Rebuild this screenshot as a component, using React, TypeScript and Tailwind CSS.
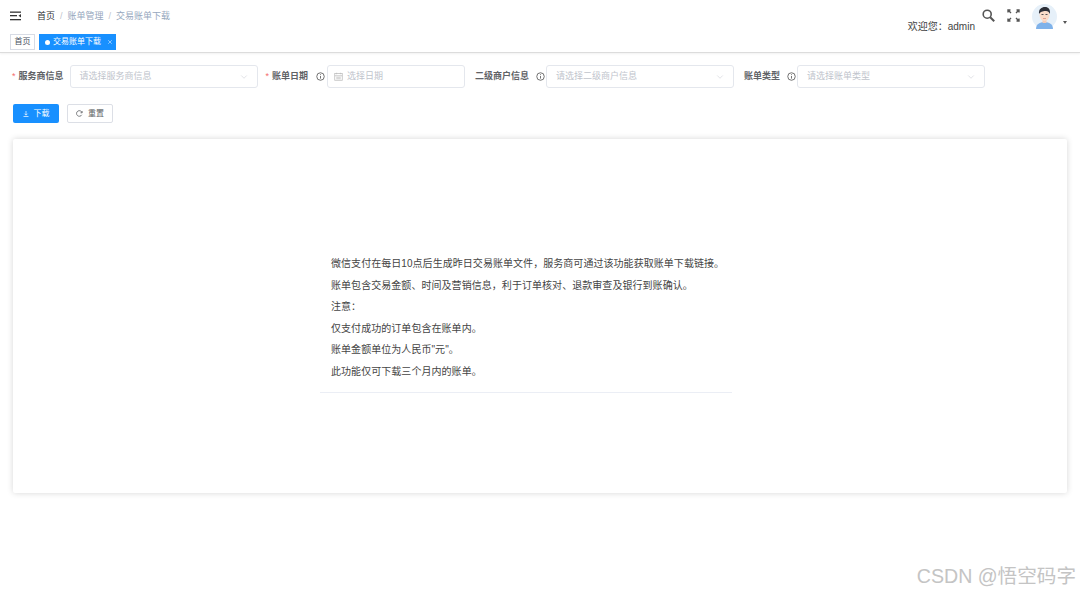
import React from 'react';
import { ChevronDown, X } from 'lucide-react';

const FONT = "font-['Liberation_Sans','Noto_Sans_CJK_SC',sans-serif]";

const InfoIcon = () => (
  <svg width="9" height="9" viewBox="0 0 12 12" fill="none" stroke="#555" strokeWidth="1.1">
    <circle cx="6" cy="6" r="5" />
    <path d="M6 3v1M6 5.2v3.6" />
  </svg>
);

const CalendarIcon = () => (
  <svg width="9" height="9" viewBox="0 0 12 12" fill="none" stroke="#bbb" strokeWidth="1">
    <rect x="1" y="2" width="10" height="9" />
    <path d="M1 5h10M3.5 1v2M8.5 1v2M3 7h6M3 9h6" />
  </svg>
);

const SelectBox = ({ text, width }: { text: string; width: string }) => (
  <div className={`${width} h-[23px] flex items-center justify-between border border-[#e4e7ed] rounded-[3px] pl-[9px] pr-[8px]`}>
    <span className="text-[9px] pt-px text-[#c0c4cc]">{text}</span>
    <ChevronDown size={10} strokeWidth={1} color="#b8bcc4" />
  </div>
);

const Label = ({ text, required }: { text: string; required?: boolean }) => (
  <span className="text-[9px] pt-px font-bold text-[#606266] whitespace-nowrap">
    {required && <span className="text-[#f56c6c] mr-[3px] font-normal">*</span>}
    {text}
  </span>
);

const Avatar = () => (
  <svg width="25" height="25" viewBox="0 0 25 25">
    <circle cx="12.5" cy="12.5" r="12.5" fill="#e6f0f9" />
    <path d="M4 25c0-5 4-7 8.500-7s8.500 2 8.500 7z" fill="#7fb2ea" />
    <rect x="10.500" y="14" width="4" height="5" fill="#f5cdb8" />
    <ellipse cx="12.500" cy="11" rx="5" ry="6" fill="#fbdcc9" />
    <path d="M7 10c-.5-5 2.500-7 6-7s5.500 2.500 5 7c-1-2-2-3-4-3s-5 0-7 3z" fill="#2c2f38" />
    <path d="M9.500 10.500h2M13.500 10.500h2" stroke="#2c2f38" strokeWidth="0.800" />
    <path d="M11 14.500h3" stroke="#d98a7a" strokeWidth="0.700" />
  </svg>
);

const lines = [
  '微信支付在每日10点后生成昨日交易账单文件，服务商可通过该功能获取账单下载链接。',
  '账单包含交易金额、时间及营销信息，利于订单核对、退款审查及银行到账确认。',
  '注意：',
  '仅支付成功的订单包含在账单内。',
  '账单金额单位为人民币"元"。',
  '此功能仅可下载三个月内的账单。',
];

export default function App() {
  return (
    <div className={`${FONT} relative w-[1080px] h-[593px] bg-white overflow-hidden`}>
      <header className="h-[53px] border-b border-[#dcdcdc] shadow-[0_1px_2px_rgba(0,0,0,0.06)] flex flex-col">
        <div className="h-[34px] flex items-start">
          <div className="flex items-center pl-[10px] pt-[10px]">
            <svg width="11" height="10" viewBox="0 0 11 10" fill="#333">
              <rect x="0" y="0.500" width="11" height="1.300" />
              <rect x="0" y="4" width="7" height="1.300" />
              <rect x="0" y="8" width="11" height="1.300" />
              <path d="M11 3l-2.500 1.700L11 6.500z" />
            </svg>
            <div className="ml-[16px] flex items-center text-[9px] leading-[12px]">
              <span className="text-[#303133]">首页</span>
              <span className="mx-[5px] text-[#c0c4cc]">/</span>
              <span className="text-[#97a8be]">账单管理</span>
              <span className="mx-[5px] text-[#c0c4cc]">/</span>
              <span className="text-[#97a8be]">交易账单下载</span>
            </div>
          </div>
          <div className="ml-auto flex items-start">
            <span className="text-[10px] leading-[14px] text-[#444] mt-[20px] mr-[7px]">欢迎您：admin</span>
            <svg width="13" height="13" viewBox="0 0 13 13" fill="none" stroke="#555" strokeWidth="1.600" className="mt-[9px]">
              <circle cx="5.200" cy="5.200" r="4" />
              <path d="M8.200 8.200l4 4" strokeWidth="2" />
            </svg>
            <svg width="13" height="13" viewBox="0 0 13 13" fill="none" stroke="#555" strokeWidth="1.400" className="mt-[9px] ml-[12px]">
              <path d="M1 1l3 3M1 3.500V1h2.500M12 1L9 4M12 3.500V1H9.500M1 12l3-3M1 9.500V12h2.500M12 12L9 9M12 9.500V12H9.500" />
            </svg>
            <div className="mt-[4px] ml-[12px]"><Avatar /></div>
            <div className="mt-[21px] ml-[6px] mr-[13px] w-0 h-0 border-x-[2.500px] border-x-transparent border-t-[3px] border-t-[#555]" />
          </div>
        </div>
        <div className="flex items-start pl-[10px] gap-[4px]">
          <div className="h-[16px] w-[25px] border border-[#d8dce5] flex items-center justify-center text-[8px] text-[#495060]">首页</div>
          <div className="h-[16px] w-[77px] bg-[#1890ff] flex items-center pl-[6px] text-[8px] text-white">
            <span className="w-[5px] h-[5px] rounded-full bg-white mr-[3px]" />
            交易账单下载
            <X size={6} strokeWidth={2} className="ml-[6px]" />
          </div>
        </div>
      </header>

      <main className="px-[12px]">
        <div className="flex items-center h-[23px] mt-[12px]">
          <Label text="服务商信息" required />
          <div className="w-[6px]" />
          <SelectBox text="请选择服务商信息" width="w-[188px]" />
          <div className="w-[8px]" />
          <Label text="账单日期" required />
          <div className="w-[8px]" />
          <InfoIcon />
          <div className="w-[2px]" />
          <div className="w-[138px] h-[23px] flex items-center border border-[#e4e7ed] rounded-[3px] pl-[6px]">
            <CalendarIcon />
            <span className="text-[9px] pt-px text-[#c0c4cc] ml-[4px]">选择日期</span>
          </div>
          <div className="w-[10px]" />
          <Label text="二级商户信息" />
          <div className="w-[7px]" />
          <InfoIcon />
          <div className="w-[1px]" />
          <SelectBox text="请选择二级商户信息" width="w-[188px]" />
          <div className="w-[10px]" />
          <Label text="账单类型" />
          <div className="w-[7px]" />
          <InfoIcon />
          <div className="w-[1px]" />
          <SelectBox text="请选择账单类型" width="w-[188px]" />
        </div>

        <div className="flex mt-[16px] ml-px gap-[8px]">
          <button className="w-[46px] h-[19px] rounded-[2px] bg-[#1890ff] text-white text-[8px] flex items-center justify-center gap-[5px]">
            <svg width="6" height="6" viewBox="0 0 6 6" stroke="#fff" strokeWidth="0.700" fill="none">
              <path d="M3 0v4M1.500 2.700L3 4.200l1.500-1.500M0.500 5.500h5" />
            </svg>
            下载
          </button>
          <button className="w-[46px] h-[19px] rounded-[2px] border border-[#dcdfe6] text-[#606266] text-[8px] flex items-center justify-center gap-[5px]">
            <svg width="7" height="7" viewBox="0 0 7 7" stroke="#606266" strokeWidth="0.800" fill="none">
              <path d="M5.800 4.800A2.800 2.800 0 1 1 6 2.600" />
              <path d="M6.100 1v1.800H4.500" />
            </svg>
            重置
          </button>
        </div>

        <section className="mt-[16px] ml-px w-[1054px] h-[354px] bg-white rounded-[2px] shadow-[0_0_6px_rgba(0,0,0,0.16)] flex flex-col items-center pt-[114px]">
          <div className="w-[412px] mr-[28px] border-b border-[#ebeef5] pl-[11px] pb-[10px]">
            {lines.map((line) => (
              <p key={line} className="text-[10px] tracking-[0.05px] leading-[21.500px] text-[#444]">{line}</p>
            ))}
          </div>
        </section>
      </main>

      <span className="absolute right-[4px] bottom-[4px] text-[19.600px] leading-[26px] text-[#c4c4c4]">CSDN @悟空码字</span>
    </div>
  );
}
